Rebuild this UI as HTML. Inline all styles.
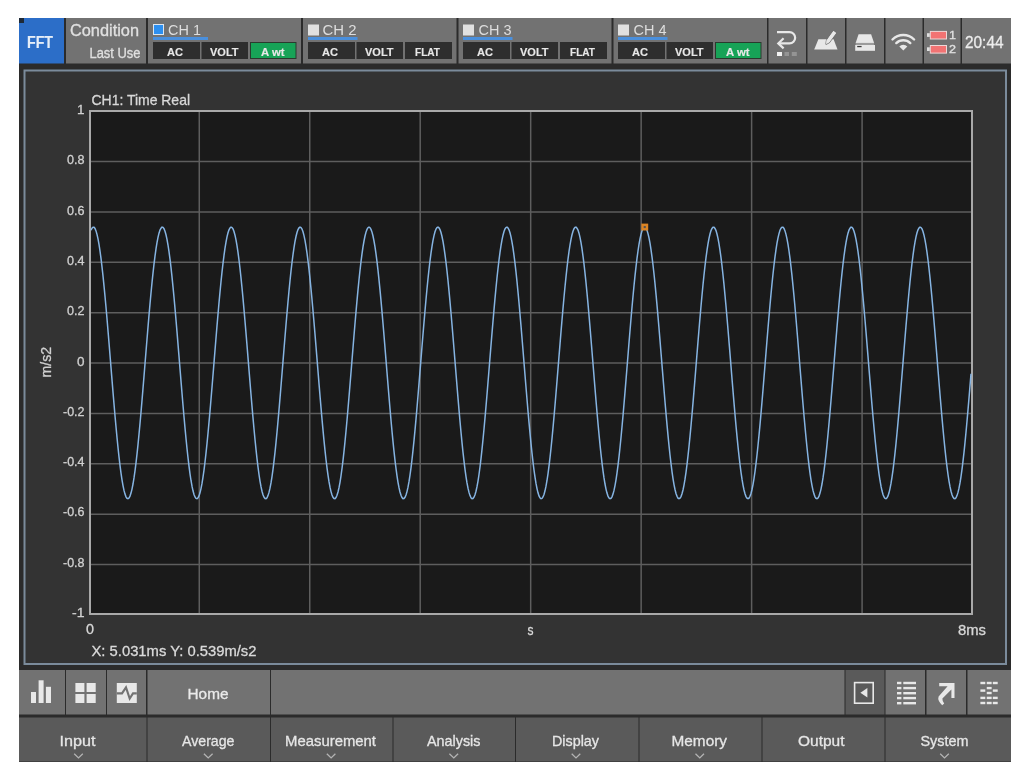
<!DOCTYPE html><html><head><meta charset="utf-8"><style>
*{margin:0;padding:0;box-sizing:border-box}
html,body{width:1024px;height:780px;background:#fff;overflow:hidden}
.a{position:absolute}
svg{position:absolute;left:0;top:0;filter:blur(0.35px)}
</style></head><body><svg width="1024" height="780" viewBox="0 0 1024 780"><rect x="19" y="18" width="992" height="744" fill="#2b2b2b" />
<rect x="19" y="18" width="45" height="45.5" fill="#2c6ec8" />
<rect x="19" y="18" width="5" height="5" fill="#1e2a38" />
<rect x="66" y="18" width="80" height="45.5" fill="#727272" />
<rect x="148" y="18" width="153" height="45.5" fill="#727272" />
<rect x="153.5" y="24.5" width="10" height="10" fill="#2c8ff0" stroke="#dce6f0" stroke-width="1"/>
<rect x="153" y="37" width="55" height="3" fill="#4a8fdc" />
<rect x="153" y="42" width="47" height="17" fill="#2e2e2e" />
<rect x="201.5" y="42" width="46.5" height="17" fill="#2e2e2e" />
<rect x="250.5" y="42.5" width="45.5" height="16" fill="#17a357" stroke="#2a3a2e" stroke-width="1"/>
<rect x="303" y="18" width="153.5" height="45.5" fill="#727272" />
<rect x="308" y="24.5" width="11" height="11" fill="#e0e0e0" />
<rect x="308" y="37" width="49.5" height="3" fill="#4a8fdc" />
<rect x="308" y="42" width="47" height="17" fill="#2e2e2e" />
<rect x="356.5" y="42" width="46.5" height="17" fill="#2e2e2e" />
<rect x="405" y="42" width="47" height="17" fill="#2e2e2e" />
<rect x="458.5" y="18" width="153.0" height="45.5" fill="#727272" />
<rect x="463" y="24.5" width="11" height="11" fill="#e0e0e0" />
<rect x="463" y="37" width="49.5" height="3" fill="#4a8fdc" />
<rect x="463" y="42" width="47" height="17" fill="#2e2e2e" />
<rect x="511.5" y="42" width="46.5" height="17" fill="#2e2e2e" />
<rect x="560" y="42" width="47" height="17" fill="#2e2e2e" />
<rect x="613.5" y="18" width="153.5" height="45.5" fill="#727272" />
<rect x="618" y="24.5" width="11" height="11" fill="#e0e0e0" />
<rect x="618" y="37" width="49.5" height="3" fill="#4a8fdc" />
<rect x="618" y="42" width="47" height="17" fill="#2e2e2e" />
<rect x="666.5" y="42" width="46.5" height="17" fill="#2e2e2e" />
<rect x="715.5" y="42.5" width="45.5" height="16" fill="#17a357" stroke="#2a3a2e" stroke-width="1"/>
<rect x="768.5" y="18" width="37.5" height="45.5" fill="#727272" />
<rect x="807.5" y="18" width="37.5" height="45.5" fill="#727272" />
<rect x="846.5" y="18" width="37.5" height="45.5" fill="#727272" />
<rect x="885.5" y="18" width="37.0" height="45.5" fill="#727272" />
<rect x="924" y="18" width="36.5" height="45.5" fill="#727272" />
<rect x="962" y="18" width="49" height="45.5" fill="#727272" />
<path d="M777,32.1 H789.5 A5.65,5.65 0 0 1 789.5,43.4 H778.5" fill="none" stroke="#e8e8e8" stroke-width="2.2"/>
<path d="M783.6,38.2 L778.3,43.4 L783.6,48.4" fill="none" stroke="#e8e8e8" stroke-width="2.2"/>
<rect x="777" y="52" width="5" height="4" fill="#f2f2f2"/>
<rect x="784.5" y="52" width="4.5" height="4" fill="#949494"/>
<rect x="791.8" y="52" width="5" height="4" fill="#949494"/>
<polygon points="818.4,39.2 833.6,39.2 837.5,49.6 814.2,49.6" fill="#e8e8e8"/>
<path d="M836.04,33.02 L833.46,31.12 L826.66,40.4 L826.2,44 L829.24,42.3 Z" fill="#e8e8e8" stroke="#727272" stroke-width="1.6" stroke-linejoin="round" paint-order="stroke"/>
<path d="M836.04,33.02 L833.46,31.12 L826.66,40.4 L826.2,44 L829.24,42.3 Z" fill="#e8e8e8"/>
<polygon points="858.6,34.2 871.1,34.2 874.1,42.9 855.6,42.9" fill="#e8e8e8"/>
<rect x="855.6" y="42.9" width="18.5" height="2.1" fill="#9c9c9c"/>
<rect x="855.2" y="45" width="19.8" height="5.8" fill="#e8e8e8"/>
<rect x="857.2" y="45.9" width="4.4" height="1.3" fill="#3a3a3a"/>
<path d="M892.5,39.5 A15.2,15.2 0 0 1 914.1,39.5" fill="none" stroke="#e8e8e8" stroke-width="2.4" stroke-linecap="round"/>
<path d="M896.3,43.1 A10.1,10.1 0 0 1 910.3,43.1" fill="none" stroke="#e8e8e8" stroke-width="2.4" stroke-linecap="round"/>
<path d="M903.3,50.5 L899.3,46.4 A5.6,5.6 0 0 1 907.3,46.4 Z" fill="#e8e8e8"/>
<rect x="930.3" y="31.4" width="16.2" height="7.6" fill="#f27373" stroke="#eed8d8" stroke-width="1"/>
<rect x="927" y="33.2" width="2.8" height="3.7" fill="#e0e0e0"/>
<rect x="930.3" y="45.5" width="16.2" height="7.6" fill="#f27373" stroke="#eed8d8" stroke-width="1"/>
<rect x="927" y="47.3" width="2.8" height="3.7" fill="#e0e0e0"/>
<rect x="24.5" y="70.5" width="981.5" height="593.5" fill="#333333" stroke="#7b8b9b" stroke-width="2"/>
<rect x="90" y="111" width="882" height="503" fill="#1a1a1a" stroke="#a9a9a9" stroke-width="2"/>
<line x1="91" x2="971" y1="161.49" y2="161.49" stroke="#5e5e5e" stroke-width="1.5"/>
<line x1="91" x2="971" y1="211.88" y2="211.88" stroke="#5e5e5e" stroke-width="1.5"/>
<line x1="91" x2="971" y1="262.27" y2="262.27" stroke="#5e5e5e" stroke-width="1.5"/>
<line x1="91" x2="971" y1="312.66" y2="312.66" stroke="#5e5e5e" stroke-width="1.5"/>
<line x1="91" x2="971" y1="363.05" y2="363.05" stroke="#5e5e5e" stroke-width="1.5"/>
<line x1="91" x2="971" y1="413.44" y2="413.44" stroke="#5e5e5e" stroke-width="1.5"/>
<line x1="91" x2="971" y1="463.83" y2="463.83" stroke="#5e5e5e" stroke-width="1.5"/>
<line x1="91" x2="971" y1="514.22" y2="514.22" stroke="#5e5e5e" stroke-width="1.5"/>
<line x1="91" x2="971" y1="564.61" y2="564.61" stroke="#5e5e5e" stroke-width="1.5"/>
<line x1="199.27" x2="199.27" y1="112" y2="613" stroke="#5e5e5e" stroke-width="1.5"/>
<line x1="309.74" x2="309.74" y1="112" y2="613" stroke="#5e5e5e" stroke-width="1.5"/>
<line x1="420.21" x2="420.21" y1="112" y2="613" stroke="#5e5e5e" stroke-width="1.5"/>
<line x1="530.68" x2="530.68" y1="112" y2="613" stroke="#5e5e5e" stroke-width="1.5"/>
<line x1="641.15" x2="641.15" y1="112" y2="613" stroke="#5e5e5e" stroke-width="1.5"/>
<line x1="751.62" x2="751.62" y1="112" y2="613" stroke="#5e5e5e" stroke-width="1.5"/>
<line x1="862.09" x2="862.09" y1="112" y2="613" stroke="#5e5e5e" stroke-width="1.5"/>
<polyline fill="none" stroke="#86b4e2" stroke-width="1.5" points="91,230.3 92,228.2 93,227.2 94,227.3 95,228.5 96,230.9 97,234.4 98,238.9 99,244.4 100,251.0 101,258.4 102,266.8 103,275.9 104,285.8 105,296.3 106,307.3 107,318.8 108,330.7 109,342.8 110,355.2 111,367.5 112,379.9 113,392.1 114,404.0 115,415.7 116,426.8 117,437.5 118,447.5 119,456.8 120,465.4 121,473.1 122,479.8 123,485.6 124,490.4 125,494.1 126,496.8 127,498.3 128,498.7 129,498.0 130,496.1 131,493.1 132,489.1 133,484.0 134,477.9 135,470.8 136,462.9 137,454.1 138,444.6 139,434.3 140,423.5 141,412.2 142,400.5 143,388.4 144,376.2 145,363.8 146,351.5 147,339.2 148,327.1 149,315.3 150,303.9 151,293.0 152,282.7 153,273.1 154,264.2 155,256.1 156,248.9 157,242.7 158,237.4 159,233.2 160,230.1 161,228.1 162,227.1 163,227.4 164,228.7 165,231.2 166,234.8 167,239.4 168,245.0 169,251.7 170,259.2 171,267.6 172,276.9 173,286.8 174,297.3 175,308.4 176,320.0 177,331.9 178,344.1 179,356.4 180,368.8 181,381.1 182,393.3 183,405.2 184,416.8 185,427.9 186,438.5 187,448.5 188,457.7 189,466.2 190,473.8 191,480.5 192,486.2 193,490.8 194,494.5 195,497.0 196,498.4 197,498.7 198,497.8 199,495.9 200,492.8 201,488.6 202,483.4 203,477.2 204,470.1 205,462.0 206,453.2 207,443.6 208,433.3 209,422.4 210,411.1 211,399.3 212,387.2 213,375.0 214,362.6 215,350.2 216,338.0 217,325.9 218,314.2 219,302.8 220,292.0 221,281.7 222,272.2 223,263.3 224,255.3 225,248.2 226,242.1 227,236.9 228,232.8 229,229.8 230,227.9 231,227.1 232,227.5 233,228.9 234,231.5 235,235.2 236,239.9 237,245.7 238,252.4 239,260.0 240,268.5 241,277.8 242,287.8 243,298.4 244,309.6 245,321.2 246,333.1 247,345.3 248,357.6 249,370.0 250,382.3 251,394.5 252,406.4 253,417.9 254,429.0 255,439.5 256,449.4 257,458.6 258,467.0 259,474.5 260,481.1 261,486.7 262,491.2 263,494.8 264,497.2 265,498.5 266,498.6 267,497.7 268,495.6 269,492.4 270,488.2 271,482.9 272,476.6 273,469.3 274,461.2 275,452.3 276,442.6 277,432.2 278,421.3 279,409.9 280,398.1 281,386.0 282,373.7 283,361.4 284,349.0 285,336.7 286,324.7 287,313.0 288,301.7 289,290.9 290,280.7 291,271.2 292,262.5 293,254.6 294,247.6 295,241.5 296,236.5 297,232.5 298,229.6 299,227.8 300,227.1 301,227.6 302,229.1 303,231.8 304,235.6 305,240.4 306,246.3 307,253.1 308,260.8 309,269.4 310,278.8 311,288.8 312,299.5 313,310.7 314,322.4 315,334.3 316,346.5 317,358.9 318,371.3 319,383.6 320,395.7 321,407.6 322,419.1 323,430.1 324,440.6 325,450.4 326,459.5 327,467.8 328,475.2 329,481.7 330,487.2 331,491.6 332,495.0 333,497.3 334,498.5 335,498.6 336,497.5 337,495.3 338,492.0 339,487.7 340,482.3 341,475.9 342,468.5 343,460.3 344,451.3 345,441.6 346,431.2 347,420.2 348,408.7 349,396.9 350,384.8 351,372.5 352,360.1 353,347.8 354,335.5 355,323.5 356,311.9 357,300.6 358,289.9 359,279.8 360,270.3 361,261.7 362,253.8 363,246.9 364,241.0 365,236.0 366,232.1 367,229.4 368,227.7 369,227.1 370,227.7 371,229.4 372,232.1 373,236.0 374,241.0 375,246.9 376,253.8 377,261.7 378,270.3 379,279.8 380,289.9 381,300.6 382,311.9 383,323.5 384,335.5 385,347.8 386,360.1 387,372.5 388,384.8 389,396.9 390,408.7 391,420.2 392,431.2 393,441.6 394,451.3 395,460.3 396,468.5 397,475.9 398,482.3 399,487.7 400,492.0 401,495.3 402,497.5 403,498.6 404,498.5 405,497.3 406,495.0 407,491.6 408,487.2 409,481.7 410,475.2 411,467.8 412,459.5 413,450.4 414,440.6 415,430.1 416,419.1 417,407.6 418,395.7 419,383.6 420,371.3 421,358.9 422,346.5 423,334.3 424,322.4 425,310.7 426,299.5 427,288.8 428,278.8 429,269.4 430,260.8 431,253.1 432,246.3 433,240.4 434,235.6 435,231.8 436,229.1 437,227.6 438,227.1 439,227.8 440,229.6 441,232.5 442,236.5 443,241.5 444,247.6 445,254.6 446,262.5 447,271.2 448,280.7 449,290.9 450,301.7 451,313.0 452,324.7 453,336.7 454,349.0 455,361.4 456,373.7 457,386.0 458,398.1 459,409.9 460,421.3 461,432.2 462,442.6 463,452.3 464,461.2 465,469.3 466,476.6 467,482.9 468,488.2 469,492.4 470,495.6 471,497.7 472,498.6 473,498.5 474,497.2 475,494.8 476,491.2 477,486.7 478,481.1 479,474.5 480,467.0 481,458.6 482,449.4 483,439.5 484,429.0 485,417.9 486,406.4 487,394.5 488,382.3 489,370.0 490,357.6 491,345.3 492,333.1 493,321.2 494,309.6 495,298.4 496,287.8 497,277.8 498,268.5 499,260.0 500,252.4 501,245.7 502,239.9 503,235.2 504,231.5 505,228.9 506,227.5 507,227.1 508,227.9 509,229.8 510,232.8 511,236.9 512,242.1 513,248.2 514,255.3 515,263.3 516,272.2 517,281.7 518,292.0 519,302.8 520,314.2 521,325.9 522,338.0 523,350.2 524,362.6 525,375.0 526,387.2 527,399.3 528,411.1 529,422.4 530,433.3 531,443.6 532,453.2 533,462.0 534,470.1 535,477.2 536,483.4 537,488.6 538,492.8 539,495.9 540,497.8 541,498.7 542,498.4 543,497.0 544,494.5 545,490.8 546,486.2 547,480.5 548,473.8 549,466.2 550,457.7 551,448.5 552,438.5 553,427.9 554,416.8 555,405.2 556,393.3 557,381.1 558,368.8 559,356.4 560,344.1 561,331.9 562,320.0 563,308.4 564,297.3 565,286.8 566,276.9 567,267.6 568,259.2 569,251.7 570,245.0 571,239.4 572,234.8 573,231.2 574,228.7 575,227.4 576,227.1 577,228.1 578,230.1 579,233.2 580,237.4 581,242.7 582,248.9 583,256.1 584,264.2 585,273.1 586,282.7 587,293.0 588,303.9 589,315.3 590,327.1 591,339.2 592,351.5 593,363.8 594,376.2 595,388.4 596,400.5 597,412.2 598,423.5 599,434.3 600,444.6 601,454.1 602,462.9 603,470.8 604,477.9 605,484.0 606,489.1 607,493.1 608,496.1 609,498.0 610,498.7 611,498.3 612,496.8 613,494.1 614,490.4 615,485.6 616,479.8 617,473.1 618,465.4 619,456.8 620,447.5 621,437.5 622,426.8 623,415.7 624,404.0 625,392.1 626,379.9 627,367.5 628,355.2 629,342.8 630,330.7 631,318.8 632,307.3 633,296.3 634,285.8 635,275.9 636,266.8 637,258.4 638,251.0 639,244.4 640,238.9 641,234.4 642,230.9 643,228.5 644,227.3 645,227.2 646,228.2 647,230.3 648,233.6 649,237.9 650,243.2 651,249.6 652,256.9 653,265.0 654,274.0 655,283.7 656,294.1 657,305.1 658,316.5 659,328.3 660,340.4 661,352.7 662,365.1 663,377.4 664,389.7 665,401.7 666,413.4 667,424.6 668,435.4 669,445.5 670,455.0 671,463.7 672,471.6 673,478.6 674,484.6 675,489.5 676,493.5 677,496.3 678,498.1 679,498.7 680,498.2 681,496.6 682,493.8 683,490.0 684,485.1 685,479.2 686,472.3 687,464.5 688,455.9 689,446.5 690,436.4 691,425.7 692,414.5 693,402.9 694,390.9 695,378.7 696,366.3 697,353.9 698,341.6 699,329.5 700,317.7 701,306.2 702,295.2 703,284.7 704,275.0 705,265.9 706,257.6 707,250.3 708,243.8 709,238.4 710,234.0 711,230.6 712,228.4 713,227.2 714,227.2 715,228.4 716,230.6 717,234.0 718,238.4 719,243.8 720,250.3 721,257.6 722,265.9 723,275.0 724,284.7 725,295.2 726,306.2 727,317.7 728,329.5 729,341.6 730,353.9 731,366.3 732,378.7 733,390.9 734,402.9 735,414.5 736,425.7 737,436.4 738,446.5 739,455.9 740,464.5 741,472.3 742,479.2 743,485.1 744,490.0 745,493.8 746,496.6 747,498.2 748,498.7 749,498.1 750,496.3 751,493.5 752,489.5 753,484.6 754,478.6 755,471.6 756,463.7 757,455.0 758,445.5 759,435.4 760,424.6 761,413.4 762,401.7 763,389.7 764,377.4 765,365.1 766,352.7 767,340.4 768,328.3 769,316.5 770,305.1 771,294.1 772,283.7 773,274.0 774,265.0 775,256.9 776,249.6 777,243.2 778,237.9 779,233.6 780,230.3 781,228.2 782,227.2 783,227.3 784,228.5 785,230.9 786,234.4 787,238.9 788,244.4 789,251.0 790,258.4 791,266.8 792,275.9 793,285.8 794,296.3 795,307.3 796,318.8 797,330.7 798,342.8 799,355.2 800,367.5 801,379.9 802,392.1 803,404.0 804,415.7 805,426.8 806,437.5 807,447.5 808,456.8 809,465.4 810,473.1 811,479.8 812,485.6 813,490.4 814,494.1 815,496.8 816,498.3 817,498.7 818,498.0 819,496.1 820,493.1 821,489.1 822,484.0 823,477.9 824,470.8 825,462.9 826,454.1 827,444.6 828,434.3 829,423.5 830,412.2 831,400.5 832,388.4 833,376.2 834,363.8 835,351.5 836,339.2 837,327.1 838,315.3 839,303.9 840,293.0 841,282.7 842,273.1 843,264.2 844,256.1 845,248.9 846,242.7 847,237.4 848,233.2 849,230.1 850,228.1 851,227.1 852,227.4 853,228.7 854,231.2 855,234.8 856,239.4 857,245.0 858,251.7 859,259.2 860,267.6 861,276.9 862,286.8 863,297.3 864,308.4 865,320.0 866,331.9 867,344.1 868,356.4 869,368.8 870,381.1 871,393.3 872,405.2 873,416.8 874,427.9 875,438.5 876,448.5 877,457.7 878,466.2 879,473.8 880,480.5 881,486.2 882,490.8 883,494.5 884,497.0 885,498.4 886,498.7 887,497.8 888,495.9 889,492.8 890,488.6 891,483.4 892,477.2 893,470.1 894,462.0 895,453.2 896,443.6 897,433.3 898,422.4 899,411.1 900,399.3 901,387.2 902,375.0 903,362.6 904,350.2 905,338.0 906,325.9 907,314.2 908,302.8 909,292.0 910,281.7 911,272.2 912,263.3 913,255.3 914,248.2 915,242.1 916,236.9 917,232.8 918,229.8 919,227.9 920,227.1 921,227.5 922,228.9 923,231.5 924,235.2 925,239.9 926,245.7 927,252.4 928,260.0 929,268.5 930,277.8 931,287.8 932,298.4 933,309.6 934,321.2 935,333.1 936,345.3 937,357.6 938,370.0 939,382.3 940,394.5 941,406.4 942,417.9 943,429.0 944,439.5 945,449.4 946,458.6 947,467.0 948,474.5 949,481.1 950,486.7 951,491.2 952,494.8 953,497.2 954,498.5 955,498.6 956,497.7 957,495.6 958,492.4 959,488.2 960,482.9 961,476.6 962,469.3 963,461.2 964,452.3 965,442.6 966,432.2 967,421.3 968,409.9 969,398.1 970,386.0 971,373.7"/>
<rect x="641.3" y="223.6" width="6.9" height="6.9" fill="#dc8424"/><rect x="643.7" y="226" width="2.1" height="2.1" fill="#555"/>
<rect x="19" y="670" width="46" height="44.5" fill="#727272" />
<rect x="66" y="670" width="40" height="44.5" fill="#727272" />
<rect x="107" y="670" width="39" height="44.5" fill="#727272" />
<rect x="147.5" y="670" width="122.5" height="44.5" fill="#727272" />
<rect x="271" y="670" width="573.5" height="44.5" fill="#727272" />
<rect x="845.5" y="670" width="39.0" height="44.5" fill="#5a5a5a" />
<rect x="885.5" y="670" width="39.5" height="44.5" fill="#727272" />
<rect x="926.5" y="670" width="39.5" height="44.5" fill="#727272" />
<rect x="967.5" y="670" width="43.5" height="44.5" fill="#727272" />
<rect x="31" y="692" width="5" height="11" fill="#e8e8e8"/>
<rect x="38.6" y="680.3" width="5" height="22.7" fill="#e8e8e8"/>
<rect x="45.9" y="686.8" width="5.1" height="16.2" fill="#e8e8e8"/>
<rect x="75.4" y="683" width="9" height="9" fill="#e8e8e8"/>
<rect x="86.6" y="683" width="9.1" height="9" fill="#e8e8e8"/>
<rect x="75.4" y="694" width="9" height="9" fill="#e8e8e8"/>
<rect x="86.6" y="694" width="9.1" height="9" fill="#e8e8e8"/>
<rect x="116.8" y="683" width="20" height="20" fill="#e8e8e8"/>
<polyline points="116.8,693.4 122,693.4 126,687.3 129.7,698.5 133,693.4 136.8,693.4" fill="none" stroke="#727272" stroke-width="2.1" stroke-linejoin="miter"/>
<rect x="854.6" y="682.6" width="18.6" height="20.6" fill="none" stroke="#e8e8e8" stroke-width="1.6"/>
<polygon points="860.4,692.8 867.4,688.1 867.4,697.6" fill="#e8e8e8"/>
<rect x="897" y="681.8" width="4.4" height="2.4" fill="#e8e8e8"/><rect x="903.3" y="681.8" width="12.7" height="2.4" fill="#e8e8e8"/>
<rect x="897" y="686.9" width="4.4" height="2.4" fill="#e8e8e8"/><rect x="903.3" y="686.9" width="12.7" height="2.4" fill="#e8e8e8"/>
<rect x="897" y="692.0" width="4.4" height="2.4" fill="#e8e8e8"/><rect x="903.3" y="692.0" width="12.7" height="2.4" fill="#e8e8e8"/>
<rect x="897" y="696.9" width="4.4" height="2.4" fill="#e8e8e8"/><rect x="903.3" y="696.9" width="12.7" height="2.4" fill="#e8e8e8"/>
<rect x="897" y="702.0" width="4.4" height="2.4" fill="#e8e8e8"/><rect x="903.3" y="702.0" width="12.7" height="2.4" fill="#e8e8e8"/>
<path d="M939.2,683 H954.5 V697.9 H951.4 V689.4 L942.4,698.6 Q942.2,701.4 944.2,703.4 L942.2,705.2 Q937.2,700.6 938.6,696.6 L947.6,686.2 H939.2 Z" fill="#e8e8e8"/>
<rect x="980.4" y="681.8" width="4.9" height="2.4" fill="#e8e8e8"/>
<rect x="980.4" y="689.4" width="4.9" height="2.4" fill="#e8e8e8"/>
<rect x="980.4" y="696.6999999999999" width="4.9" height="2.4" fill="#e8e8e8"/>
<rect x="980.4" y="701.8" width="4.9" height="2.4" fill="#e8e8e8"/>
<rect x="986.75" y="681.8" width="4.9" height="2.4" fill="#e8e8e8"/>
<rect x="986.75" y="686.9" width="4.9" height="2.4" fill="#e8e8e8"/>
<rect x="986.75" y="691.8" width="4.9" height="2.4" fill="#e8e8e8"/>
<rect x="986.75" y="696.6999999999999" width="4.9" height="2.4" fill="#e8e8e8"/>
<rect x="986.75" y="701.8" width="4.9" height="2.4" fill="#e8e8e8"/>
<rect x="992.8" y="681.8" width="4.9" height="2.4" fill="#e8e8e8"/>
<rect x="992.8" y="689.4" width="4.9" height="2.4" fill="#e8e8e8"/>
<rect x="992.8" y="696.6999999999999" width="4.9" height="2.4" fill="#e8e8e8"/>
<rect x="992.8" y="701.8" width="4.9" height="2.4" fill="#e8e8e8"/>
<rect x="19" y="717.5" width="127.5" height="44" fill="#5a5a5a" />
<polyline points="74.2,753.8 78.5,757.9 82.8,753.8" fill="none" stroke="#b4b4b4" stroke-width="1.3"/>
<rect x="147.5" y="717.5" width="122.5" height="44" fill="#5a5a5a" />
<polyline points="203.9,753.8 208.2,757.9 212.6,753.8" fill="none" stroke="#b4b4b4" stroke-width="1.3"/>
<rect x="271" y="717.5" width="121.5" height="44" fill="#5a5a5a" />
<polyline points="326.8,753.8 331.1,757.9 335.4,753.8" fill="none" stroke="#b4b4b4" stroke-width="1.3"/>
<rect x="393.5" y="717.5" width="121.5" height="44" fill="#5a5a5a" />
<polyline points="449.4,753.8 453.8,757.9 458.1,753.8" fill="none" stroke="#b4b4b4" stroke-width="1.3"/>
<rect x="516" y="717.5" width="122.5" height="44" fill="#5a5a5a" />
<polyline points="571.7,753.8 576.0,757.9 580.3,753.8" fill="none" stroke="#b4b4b4" stroke-width="1.3"/>
<rect x="639.5" y="717.5" width="122.0" height="44" fill="#5a5a5a" />
<polyline points="695.5,753.8 699.8,757.9 704.0,753.8" fill="none" stroke="#b4b4b4" stroke-width="1.3"/>
<rect x="762.5" y="717.5" width="122.0" height="44" fill="#5a5a5a" />
<rect x="885.5" y="717.5" width="125.5" height="44" fill="#5a5a5a" />
<polyline points="940.2,753.8 944.5,757.9 948.8,753.8" fill="none" stroke="#b4b4b4" stroke-width="1.3"/>
<text x="27.00" y="47.8" font-family="Liberation Sans" font-weight="bold" font-size="16" textLength="26.00" lengthAdjust="spacingAndGlyphs" fill="#e6eef8" stroke="#e6eef8" stroke-width="0.15">FFT</text>
<text x="70.00" y="35.8" font-family="Liberation Sans" font-weight="normal" font-size="16" textLength="69.00" lengthAdjust="spacingAndGlyphs" fill="#e0e0e0" stroke="#e0e0e0" stroke-width="0.3">Condition</text>
<text x="89.50" y="58.0" font-family="Liberation Sans" font-weight="normal" font-size="14" textLength="51.00" lengthAdjust="spacingAndGlyphs" fill="#e0e0e0" stroke="#e0e0e0" stroke-width="0.3">Last Use</text>
<text x="168.00" y="35.4" font-family="Liberation Sans" font-weight="normal" font-size="15" textLength="33.00" lengthAdjust="spacingAndGlyphs" fill="#dedede" stroke="#dedede" stroke-width="0">CH 1</text>
<text x="322.50" y="35.4" font-family="Liberation Sans" font-weight="normal" font-size="15" textLength="34.00" lengthAdjust="spacingAndGlyphs" fill="#dedede" stroke="#dedede" stroke-width="0">CH 2</text>
<text x="478.50" y="35.4" font-family="Liberation Sans" font-weight="normal" font-size="15" textLength="33.00" lengthAdjust="spacingAndGlyphs" fill="#dedede" stroke="#dedede" stroke-width="0">CH 3</text>
<text x="633.50" y="35.4" font-family="Liberation Sans" font-weight="normal" font-size="15" textLength="33.00" lengthAdjust="spacingAndGlyphs" fill="#dedede" stroke="#dedede" stroke-width="0">CH 4</text>
<text x="965.00" y="48.2" font-family="Liberation Sans" font-weight="normal" font-size="16" textLength="38.50" lengthAdjust="spacingAndGlyphs" fill="#ececec" stroke="#ececec" stroke-width="0.3">20:44</text>
<text x="91.50" y="105.4" font-family="Liberation Sans" font-weight="normal" font-size="14.5" textLength="98.50" lengthAdjust="spacingAndGlyphs" fill="#d8d8d8" stroke="#d8d8d8" stroke-width="0.3">CH1: Time Real</text>
<text x="86.00" y="634.3" font-family="Liberation Sans" font-weight="normal" font-size="14" textLength="8.00" lengthAdjust="spacingAndGlyphs" fill="#d8d8d8" stroke="#d8d8d8" stroke-width="0.3">0</text>
<text x="527.50" y="634.6" font-family="Liberation Sans" font-weight="normal" font-size="14" textLength="6.00" lengthAdjust="spacingAndGlyphs" fill="#d8d8d8" stroke="#d8d8d8" stroke-width="0.3">s</text>
<text x="958.00" y="634.5" font-family="Liberation Sans" font-weight="normal" font-size="14" textLength="28.00" lengthAdjust="spacingAndGlyphs" fill="#d8d8d8" stroke="#d8d8d8" stroke-width="0.3">8ms</text>
<text x="91.50" y="655.8" font-family="Liberation Sans" font-weight="normal" font-size="15" textLength="165.00" lengthAdjust="spacingAndGlyphs" fill="#dadada" stroke="#dadada" stroke-width="0.3">X: 5.031ms Y: 0.539m/s2</text>
<text x="187.50" y="699.0" font-family="Liberation Sans" font-weight="normal" font-size="15.5" textLength="41.00" lengthAdjust="spacingAndGlyphs" fill="#eaeaea" stroke="#eaeaea" stroke-width="0.3">Home</text>
<text x="59.50" y="746.2" font-family="Liberation Sans" font-weight="normal" font-size="15" textLength="36.00" lengthAdjust="spacingAndGlyphs" fill="#e6e6e6" stroke="#e6e6e6" stroke-width="0.3">Input</text>
<text x="182.00" y="746.2" font-family="Liberation Sans" font-weight="normal" font-size="15" textLength="52.50" lengthAdjust="spacingAndGlyphs" fill="#e6e6e6" stroke="#e6e6e6" stroke-width="0.3">Average</text>
<text x="285.00" y="746.2" font-family="Liberation Sans" font-weight="normal" font-size="15" textLength="91.00" lengthAdjust="spacingAndGlyphs" fill="#e6e6e6" stroke="#e6e6e6" stroke-width="0.3">Measurement</text>
<text x="427.00" y="746.2" font-family="Liberation Sans" font-weight="normal" font-size="15" textLength="53.50" lengthAdjust="spacingAndGlyphs" fill="#e6e6e6" stroke="#e6e6e6" stroke-width="0.3">Analysis</text>
<text x="552.00" y="746.2" font-family="Liberation Sans" font-weight="normal" font-size="15" textLength="47.00" lengthAdjust="spacingAndGlyphs" fill="#e6e6e6" stroke="#e6e6e6" stroke-width="0.3">Display</text>
<text x="671.50" y="746.2" font-family="Liberation Sans" font-weight="normal" font-size="15" textLength="55.50" lengthAdjust="spacingAndGlyphs" fill="#e6e6e6" stroke="#e6e6e6" stroke-width="0.3">Memory</text>
<text x="798.00" y="746.2" font-family="Liberation Sans" font-weight="normal" font-size="15" textLength="46.50" lengthAdjust="spacingAndGlyphs" fill="#e6e6e6" stroke="#e6e6e6" stroke-width="0.3">Output</text>
<text x="920.50" y="746.2" font-family="Liberation Sans" font-weight="normal" font-size="15" textLength="48.00" lengthAdjust="spacingAndGlyphs" fill="#e6e6e6" stroke="#e6e6e6" stroke-width="0.3">System</text>
<text x="167.00" y="55.6" font-family="Liberation Sans" font-weight="bold" font-size="11.5" textLength="16.00" lengthAdjust="spacingAndGlyphs" fill="#e8e8e8" stroke="#e8e8e8" stroke-width="0.15">AC</text>
<text x="210.00" y="55.6" font-family="Liberation Sans" font-weight="bold" font-size="11.5" textLength="28.50" lengthAdjust="spacingAndGlyphs" fill="#e8e8e8" stroke="#e8e8e8" stroke-width="0.15">VOLT</text>
<text x="261.00" y="55.6" font-family="Liberation Sans" font-weight="bold" font-size="11.5" textLength="23.50" lengthAdjust="spacingAndGlyphs" fill="#e8e8e8" stroke="#e8e8e8" stroke-width="0.15">A wt</text>
<text x="322.00" y="55.6" font-family="Liberation Sans" font-weight="bold" font-size="11.5" textLength="16.00" lengthAdjust="spacingAndGlyphs" fill="#e8e8e8" stroke="#e8e8e8" stroke-width="0.15">AC</text>
<text x="365.00" y="55.6" font-family="Liberation Sans" font-weight="bold" font-size="11.5" textLength="28.50" lengthAdjust="spacingAndGlyphs" fill="#e8e8e8" stroke="#e8e8e8" stroke-width="0.15">VOLT</text>
<text x="415.00" y="55.6" font-family="Liberation Sans" font-weight="bold" font-size="11.5" textLength="25.00" lengthAdjust="spacingAndGlyphs" fill="#e8e8e8" stroke="#e8e8e8" stroke-width="0.15">FLAT</text>
<text x="477.00" y="55.6" font-family="Liberation Sans" font-weight="bold" font-size="11.5" textLength="16.00" lengthAdjust="spacingAndGlyphs" fill="#e8e8e8" stroke="#e8e8e8" stroke-width="0.15">AC</text>
<text x="520.00" y="55.6" font-family="Liberation Sans" font-weight="bold" font-size="11.5" textLength="28.50" lengthAdjust="spacingAndGlyphs" fill="#e8e8e8" stroke="#e8e8e8" stroke-width="0.15">VOLT</text>
<text x="570.00" y="55.6" font-family="Liberation Sans" font-weight="bold" font-size="11.5" textLength="25.00" lengthAdjust="spacingAndGlyphs" fill="#e8e8e8" stroke="#e8e8e8" stroke-width="0.15">FLAT</text>
<text x="632.00" y="55.6" font-family="Liberation Sans" font-weight="bold" font-size="11.5" textLength="16.00" lengthAdjust="spacingAndGlyphs" fill="#e8e8e8" stroke="#e8e8e8" stroke-width="0.15">AC</text>
<text x="675.00" y="55.6" font-family="Liberation Sans" font-weight="bold" font-size="11.5" textLength="28.50" lengthAdjust="spacingAndGlyphs" fill="#e8e8e8" stroke="#e8e8e8" stroke-width="0.15">VOLT</text>
<text x="726.00" y="55.6" font-family="Liberation Sans" font-weight="bold" font-size="11.5" textLength="23.50" lengthAdjust="spacingAndGlyphs" fill="#e8e8e8" stroke="#e8e8e8" stroke-width="0.15">A wt</text>
<text x="77.00" y="114.0" font-family="Liberation Sans" font-weight="normal" font-size="13" textLength="7.50" lengthAdjust="spacingAndGlyphs" fill="#d2d2d2" stroke="#d2d2d2" stroke-width="0.3">1</text>
<text x="67.00" y="164.29999999999998" font-family="Liberation Sans" font-weight="normal" font-size="13" textLength="17.50" lengthAdjust="spacingAndGlyphs" fill="#d2d2d2" stroke="#d2d2d2" stroke-width="0.3">0.8</text>
<text x="67.00" y="214.6" font-family="Liberation Sans" font-weight="normal" font-size="13" textLength="17.50" lengthAdjust="spacingAndGlyphs" fill="#d2d2d2" stroke="#d2d2d2" stroke-width="0.3">0.6</text>
<text x="67.00" y="264.9" font-family="Liberation Sans" font-weight="normal" font-size="13" textLength="17.50" lengthAdjust="spacingAndGlyphs" fill="#d2d2d2" stroke="#d2d2d2" stroke-width="0.3">0.4</text>
<text x="67.00" y="315.20000000000005" font-family="Liberation Sans" font-weight="normal" font-size="13" textLength="17.50" lengthAdjust="spacingAndGlyphs" fill="#d2d2d2" stroke="#d2d2d2" stroke-width="0.3">0.2</text>
<text x="77.00" y="365.5" font-family="Liberation Sans" font-weight="normal" font-size="13" textLength="7.50" lengthAdjust="spacingAndGlyphs" fill="#d2d2d2" stroke="#d2d2d2" stroke-width="0.3">0</text>
<text x="63.00" y="415.79999999999995" font-family="Liberation Sans" font-weight="normal" font-size="13" textLength="21.50" lengthAdjust="spacingAndGlyphs" fill="#d2d2d2" stroke="#d2d2d2" stroke-width="0.3">-0.2</text>
<text x="63.00" y="466.1" font-family="Liberation Sans" font-weight="normal" font-size="13" textLength="21.50" lengthAdjust="spacingAndGlyphs" fill="#d2d2d2" stroke="#d2d2d2" stroke-width="0.3">-0.4</text>
<text x="63.00" y="516.4" font-family="Liberation Sans" font-weight="normal" font-size="13" textLength="21.50" lengthAdjust="spacingAndGlyphs" fill="#d2d2d2" stroke="#d2d2d2" stroke-width="0.3">-0.6</text>
<text x="63.00" y="566.7" font-family="Liberation Sans" font-weight="normal" font-size="13" textLength="21.50" lengthAdjust="spacingAndGlyphs" fill="#d2d2d2" stroke="#d2d2d2" stroke-width="0.3">-0.8</text>
<text x="72.00" y="617.0" font-family="Liberation Sans" font-weight="normal" font-size="13" textLength="12.50" lengthAdjust="spacingAndGlyphs" fill="#d2d2d2" stroke="#d2d2d2" stroke-width="0.3">-1</text>
<text x="949.00" y="39.3" font-family="Liberation Sans" font-weight="normal" font-size="11" textLength="7.00" lengthAdjust="spacingAndGlyphs" fill="#e0e0e0" stroke="#e0e0e0" stroke-width="0.3">1</text>
<text x="949.00" y="53.1" font-family="Liberation Sans" font-weight="normal" font-size="11" textLength="7.00" lengthAdjust="spacingAndGlyphs" fill="#e0e0e0" stroke="#e0e0e0" stroke-width="0.3">2</text>
<text transform="translate(50.6,377.4) rotate(-90)" x="0" y="0" font-family="Liberation Sans" font-size="14" textLength="30.6" lengthAdjust="spacingAndGlyphs" fill="#d0d0d0" stroke="#d0d0d0" stroke-width="0.3">m/s2</text></svg></body></html>
